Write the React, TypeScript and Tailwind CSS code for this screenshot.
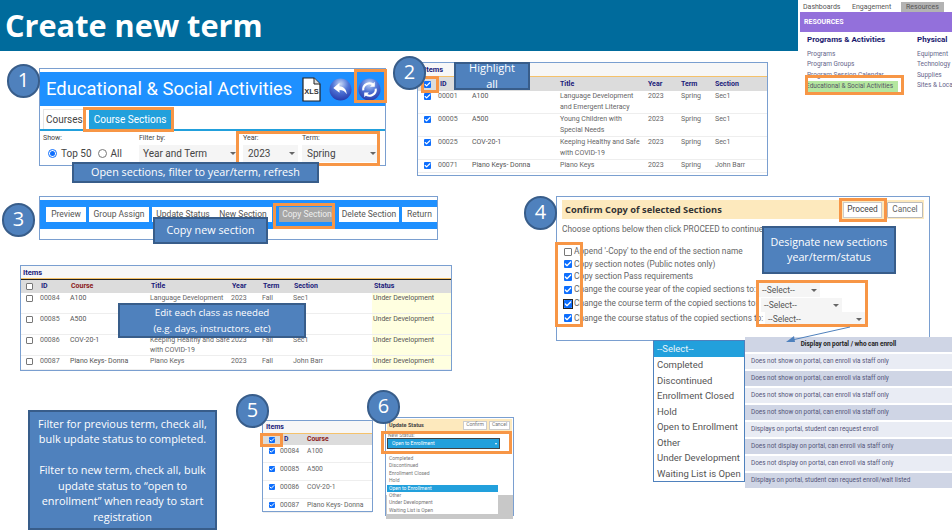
import { Check } from 'lucide-react'

const OPEN = 'font-["Open_Sans",sans-serif]'

const SECTIONS = [
  { id: '00001', course: 'A100', title: ['Language Development', 'and Emergent Literacy'], section: 'Sec1' },
  { id: '00005', course: 'A500', title: ['Young Children with', 'Special Needs'], section: 'Sec1' },
  { id: '00025', course: 'COV-20-1', title: ['Keeping Healthy and Safe', 'with COVID-19'], section: 'Sec1' },
  { id: '00071', course: 'Piano Keys- Donna', title: ['Piano Keys'], section: 'John Barr' },
]

const COPIED = [
  { id: '00084', course: 'A100', title: ['Language Development'], section: 'Sec1' },
  { id: '00085', course: 'A500', title: [''], section: '' },
  { id: '00086', course: 'COV-20-1', title: ['Keeping Healthy and Safe', 'with COVID-19'], section: 'Sec1' },
  { id: '00087', course: 'Piano Keys- Donna', title: ['Piano Keys'], section: 'John Barr' },
]

const STATUSES = ['Completed', 'Discontinued', 'Enrollment Closed', 'Hold', 'Open to Enrollment', 'Other', 'Under Development', 'Waiting List is Open']

const PORTAL = [
  'Does not show on portal, can enroll via staff only',
  'Does not show on portal, can enroll via staff only',
  'Does not show on portal, can enroll via staff only',
  'Does not show on portal, can enroll via staff only',
  'Displays on portal, student can request enroll',
  'Does not display on portal, can enroll via staff only',
  'Does not display on portal, can enroll via staff only',
  'Displays on portal, student can request enroll/wait listed',
]

function Step({ n, className }: { n: number; className: string }) {
  return (
    <div className={`absolute z-30 flex h-[34px] w-[33px] items-center justify-center rounded-full border-2 border-[#385d8a] bg-[#4f81bd] pb-[3px] text-[20px] text-white ${OPEN} ${className}`}>
      {n}
    </div>
  )
}

function Callout({ className, children }: { className: string; children: React.ReactNode }) {
  return (
    <div className={`absolute z-20 flex flex-col items-center justify-center border-2 border-[#385d8a] bg-[#4f81bd] text-center text-white ${OPEN} ${className}`}>
      {children}
    </div>
  )
}

function Mark({ className }: { className: string }) {
  return <div className={`absolute z-10 border-[3px] border-[#f79646] ${className}`} />
}

function Box({ on = true, size = 'size-[7px]' }: { on?: boolean; size?: string }) {
  return on ? (
    <span className={`flex ${size} items-center justify-center rounded-[1px] bg-[#0d6efd] text-white`}>
      <Check className="size-full" strokeWidth={4} />
    </span>
  ) : (
    <span className={`block ${size} rounded-[1px] border border-[#777] bg-white`} />
  )
}

function Select({ label, className }: { label: string; className: string }) {
  return (
    <div className={`flex items-center justify-between bg-[#f5f5f5] ${className}`}>
      <span>{label}</span>
      <span className="mr-[1px] h-0 w-0 border-x-[3px] border-t-[3px] border-x-transparent border-t-[#666]" />
    </div>
  )
}

function RoundIcon({ kind }: { kind: 'back' | 'refresh' }) {
  const gid = `grad-${kind}`
  return (
    <svg width="23" height="23" viewBox="0 0 24 24">
      <defs>
        <radialGradient id={gid} cx="50%" cy="25%" r="80%">
          <stop offset="0%" stopColor="#c5d6f5" />
          <stop offset="45%" stopColor="#4f74d6" />
          <stop offset="100%" stopColor="#2235a8" />
        </radialGradient>
      </defs>
      <circle cx="12" cy="12" r="11.5" fill={`url(#${gid})`} />
      {kind === 'back' ? (
        <path d="M11 5 L4.5 10.5 L11 15.5 V12.5 C14.5 12.5 17 14 18.5 17 C18.5 12 15.5 8.8 11 8.5 Z" fill="#fff" />
      ) : (
        <g fill="none" stroke="#fff" strokeWidth="2.2">
          <path d="M5.5 13 A6.5 6.5 0 0 1 16.5 7.5" />
          <path d="M18.5 11 A6.5 6.5 0 0 1 7.5 16.5" />
          <path d="M17.5 4 V9 H12.5 Z" fill="#fff" stroke="none" />
          <path d="M6.5 20 V15 H11.5 Z" fill="#fff" stroke="none" />
        </g>
      )}
    </svg>
  )
}

function XlsIcon() {
  return (
    <svg width="19" height="25" viewBox="0 0 19 25">
      <path d="M1 1 H12 L18 7 V24 H1 Z" fill="#fff" stroke="#222" strokeWidth="1.2" />
      <path d="M12 1 V7 H18" fill="#ddd" stroke="#222" strokeWidth="1" />
      <text x="9.5" y="17" textAnchor="middle" fontSize="7.5" fontWeight="700" fill="#333" fontFamily="Liberation Sans">XLS</text>
    </svg>
  )
}

function ActivitiesPanel() {
  return (
    <div className="absolute left-[39px] top-[68px] flex h-[98px] w-[347px] flex-col border border-[#7a9fd0] bg-white pt-[3px]">
      <div className="flex h-[34px] items-center bg-[#1e90ff] pl-[6px] text-white">
        <span className="w-[256px] text-[18.4px] leading-none whitespace-nowrap">Educational &amp; Social Activities</span>
        <XlsIcon />
        <span className="ml-[8px]"><RoundIcon kind="back" /></span>
        <span className="ml-[6px]"><RoundIcon kind="refresh" /></span>
      </div>
      <div className="flex h-[25px] items-end border-b-2 border-[#22a0dc] pl-[3px] text-[10px] text-[#444]">
        <span className="flex h-[20px] items-center border border-b-0 border-[#e5e5e5] px-[2px]">Courses</span>
        <span className="ml-[3px] flex h-[19px] items-center bg-[#22a0dc] px-[5px] text-white">Course Sections</span>
      </div>
      <div className="flex gap-[4px] pl-[3px] pt-[2px] text-[#444]">
        <div className="w-[92px] text-[7px]">
          <div>Show:</div>
          <div className="mt-[2px] flex items-center pl-[5px] text-[10px]">
            <span className="flex size-[9px] items-center justify-center rounded-full border border-[#0d6efd]"><span className="size-[5px] rounded-full bg-[#0d6efd]" /></span>
            <span className="ml-[4px]">Top 50</span>
            <span className="ml-[6px] size-[9px] rounded-full border border-[#777]" />
            <span className="ml-[4px]">All</span>
          </div>
        </div>
        <div className="w-[100px] text-[7px]">
          <div>Filter by:</div>
          <Select label="Year and Term" className="mt-[1px] h-[17px] pl-[4px] pr-[2px] text-[10px]" />
        </div>
        <div className="w-[55px] text-[7px]">
          <div>Year:</div>
          <Select label="2023" className="mt-[1px] h-[17px] pl-[5px] pr-[2px] text-[10px]" />
        </div>
        <div className="w-[78px] text-[7px]">
          <div>Term:</div>
          <Select label="Spring" className="mt-[1px] h-[17px] pl-[5px] pr-[3px] text-[10px]" />
        </div>
      </div>
    </div>
  )
}

function HighlightPanel() {
  const cols = 'grid-cols-[14px_34px_88px_88px_33px_34px_1fr]'
  return (
    <div className="absolute left-[417px] top-[62px] h-[114px] w-[351px] border border-[#7a9fd0] bg-white text-[7px] text-[#666]">
      <div className="h-[13px] bg-[#f7f7f7] pl-[6px] pt-[1px] text-[7.5px] font-bold text-[#1a1a7a]">Items</div>
      <div className="h-[1px] bg-[#f5c26b]" />
      <div className={`grid h-[14px] ${cols} items-center bg-[#dcdcdc] pl-[6px] font-bold text-[#1a1a7a]`}>
        <Box />
        <span className="pl-[2px]">ID</span>
        <span />
        <span>Title</span>
        <span>Year</span>
        <span>Term</span>
        <span>Section</span>
      </div>
      {SECTIONS.map((s, i) => (
        <div key={s.id} className={`grid ${cols} border-b border-[#eee] pl-[6px] leading-[11px] ${i < 3 ? 'h-[23px]' : 'h-[13px]'}`}>
          <span className="pt-[2px]"><Box /></span>
          <span>{s.id}</span>
          <span className="text-[#555]">{s.course}</span>
          <span className="whitespace-nowrap">{s.title.map((t) => <div key={t}>{t}</div>)}</span>
          <span>2023</span>
          <span>Spring</span>
          <span>{s.section}</span>
        </div>
      ))}
    </div>
  )
}

function ResourcesMenu() {
  return (
    <div className="absolute left-[800px] top-0 h-[95px] w-[152px] overflow-hidden bg-white text-[#555]">
      <div className="flex h-[12px] items-end gap-[8px] pl-[3px] text-[7px] leading-[10px]">
        <span className="w-[41px]">Dashboards</span>
        <span className="w-[41px]">Engagement</span>
        <span className="bg-[#b3b3b3] px-[5px]">Resources</span>
      </div>
      <div className="flex h-[20px] items-center bg-[#9370db] pl-[4px] text-[7px] font-bold text-white">RESOURCES</div>
      <div className="flex pl-[7px] pt-[3px] text-[6.5px] leading-[10.5px]">
        <div className="w-[110px] shrink-0">
          <div className="mb-[3px] text-[8px] font-bold text-[#1a1a6e]">Programs &amp; Activities</div>
          <div className="text-[#66668a]">Programs</div>
          <div className="text-[#66668a]">Program Groups</div>
          <div className="text-[#66668a]">Program Session Calendar</div>
          <div className="mt-[1px] -ml-[1px] w-[92px] bg-[#b5e7a0] whitespace-nowrap text-[#556]">Educational &amp; Social Activities</div>
        </div>
        <div className="whitespace-nowrap">
          <div className="mb-[3px] text-[8px] font-bold text-[#1a1a6e]">Physical</div>
          <div className="text-[#66668a]">Equipment</div>
          <div className="text-[#66668a]">Technology</div>
          <div className="text-[#66668a]">Supplies</div>
          <div className="text-[#66668a]">Sites &amp; Locations</div>
        </div>
      </div>
    </div>
  )
}

function ActionBar() {
  const btn = 'flex h-[15px] items-center justify-center bg-white text-[8.5px] text-[#555]'
  return (
    <div className="absolute left-[39px] top-[196px] h-[44px] w-[399px] border border-[#7a9fd0] bg-white pt-[3px]">
      <div className="flex h-[29px] items-center gap-[3px] bg-[#1e90ff] pl-[6px]">
        <span className={`${btn} w-[40px]`}>Preview</span>
        <span className={`${btn} w-[60px]`}>Group Assign</span>
        <span className={`${btn} w-[62px]`}>Update Status</span>
        <span className={`${btn} -ml-[3px] w-[58px]`}>New Section</span>
        <span className={`${btn} ml-[4px] w-[56px] !bg-[#a6a6a6] !text-[#eee]`}>Copy Section</span>
        <span className={`${btn} ml-[1px] w-[60px]`}>Delete Section</span>
        <span className={`${btn} w-[35px]`}>Return</span>
      </div>
    </div>
  )
}

function CopiedTable() {
  const cols = 'grid-cols-[14px_30px_80px_81px_31px_31px_80px_1fr]'
  return (
    <div className="absolute left-[20px] top-[265px] h-[106px] w-[432px] border border-[#7a9fd0] bg-white text-[7px] text-[#666]">
      <div className="h-[12px] bg-[#f7f7f7] pl-[2px] pt-[1px] text-[7.5px] font-bold text-[#1a1a7a]">Items</div>
      <div className="h-[1px] bg-[#f5c26b]" />
      <div className="h-[1px] bg-[#222]" />
      <div className={`grid h-[13px] ${cols} items-center bg-[#dcdcdc] pl-[5px] font-bold text-[#1a1a7a]`}>
        <Box on={false} />
        <span className="pl-[1px]">ID</span>
        <span className="pl-[1px] text-[#8b1a1a]">Course</span>
        <span className="pl-[1px]">Title</span>
        <span className="pl-[1px]">Year</span>
        <span className="pl-[1px]">Term</span>
        <span className="pl-[1px]">Section</span>
        <span className="pl-[1px]">Status</span>
      </div>
      {COPIED.map((s, i) => (
        <div key={s.id} className={`grid ${cols} border-b border-[#eee] pl-[5px] leading-[10px] ${i < 3 ? 'h-[21px]' : 'h-[14px]'}`}>
          <span className="pt-[2px]"><Box on={false} /></span>
          <span>{s.id}</span>
          <span className="text-[#555]">{s.course}</span>
          <span className="whitespace-nowrap">{s.title.map((t) => <div key={t}>{t}</div>)}</span>
          <span>{s.section ? '2023' : ''}</span>
          <span>{s.section ? 'Fall' : ''}</span>
          <span>{s.section}</span>
          <span className="-ml-[1px] bg-[#ffffe0] pl-[1px] text-[#555]">Under Development</span>
        </div>
      ))}
    </div>
  )
}

function ConfirmPanel() {
  const rows = [
    { label: "Append '-Copy' to the end of the section name", on: false, h: 'h-[13px]' },
    { label: 'Copy section notes (Public notes only)', on: true, h: 'h-[12px]' },
    { label: 'Copy section Pass requirements', on: true, h: 'h-[13px]' },
    { label: 'Change the course year of the copied sections to:', on: true, h: 'h-[13px]' },
    { label: 'Change the course term of the copied sections to:', on: true, h: 'h-[15px]' },
    { label: 'Change the course status of the copied sections to:', on: true, h: 'h-[14px]' },
  ]
  return (
    <div className="absolute left-[556px] top-[196px] h-[145px] w-[374px] border border-[#7a9fd0] bg-white text-[8.3px] text-[#666]">
      <div className="mx-[5px] mt-[3px] flex h-[19px] items-center bg-[#fde9bd] pl-[3px]">
        <span className={`flex-1 text-[9.3px] font-bold text-[#333] ${OPEN}`}>Confirm Copy of selected Sections</span>
        <span className="mr-[5px] flex h-[16px] w-[39px] items-center justify-center border border-[#ccc] bg-white text-[#444]">Proceed</span>
        <span className="mr-[1px] flex h-[16px] w-[36px] items-center justify-center rounded-[1px] border border-[#bbb] bg-white">Cancel</span>
      </div>
      <div className="mt-[4px] pl-[5px] leading-[12px]">Choose options below then click PROCEED to continue</div>
      <div className="mt-[10px] pl-[7px]">
        {rows.map((r, i) => (
          <div key={r.label} className={`flex items-center gap-[2px] whitespace-nowrap ${r.h}`}>
            <span className={i === 4 ? 'outline outline-1 outline-[#222]' : ''}><Box on={r.on} size="size-[8px]" /></span>
            <span>{r.label}</span>
          </div>
        ))}
      </div>
    </div>
  )
}

function StatusDropdown() {
  return (
    <div className="absolute left-[653px] top-[340px] z-10 h-[142px] w-[92px] border border-[#4f81bd] bg-white text-[9.5px] leading-[15.5px] text-[#555]">
      <div className="h-[16px] bg-[#22a0dc] pl-[3px] text-[#e8f4fb]">--Select--</div>
      {STATUSES.map((s) => (
        <div key={s} className="whitespace-nowrap pl-[3px]">{s}</div>
      ))}
    </div>
  )
}

function PortalTable() {
  return (
    <div className="absolute left-[745px] top-[337px] z-10 flex w-[207px] flex-col gap-[2px] bg-white text-[6.4px] text-[#55557a]">
      <div className="flex h-[15px] items-center justify-center bg-[#cfd5e5] font-bold text-[#222]">Display on portal / who can enroll</div>
      {PORTAL.map((p, i) => (
        <div key={i} className={`flex h-[15px] items-center pl-[6px] ${i % 2 === 0 ? 'bg-[#e9ecf4]' : 'bg-[#cfd5e5]'}`}>{p}</div>
      ))}
    </div>
  )
}

function MiniItems() {
  return (
    <div className="absolute left-[262px] top-[420px] h-[92px] w-[111px] border border-[#7a9fd0] bg-white text-[6.8px] text-[#666]">
      <div className="h-[12px] bg-[#f7f7f7] pl-[3px] pt-[1px] text-[7px] font-bold text-[#1a1a7a]">Items</div>
      <div className="h-[1px] bg-[#f5c26b]" />
      <div className="grid h-[11px] grid-cols-[11px_27px_1fr] items-center bg-[#dcdcdc] pl-[6px] font-bold text-[#1a1a7a]">
        <Box size="size-[6px]" />
        <span className="pl-[4px]">D</span>
        <span className="text-[#8b1a1a]">Course</span>
      </div>
      {COPIED.map((s, i) => (
        <div key={s.id} className={`grid grid-cols-[11px_27px_1fr] border-b border-[#eee] pl-[6px] pt-[2px] leading-[9px] ${i < 3 ? 'h-[18px]' : 'h-[14px]'}`}>
          <span className="pt-[1px]"><Box size="size-[6px]" /></span>
          <span>{s.id}</span>
          <span className="whitespace-nowrap">{s.course}</span>
        </div>
      ))}
    </div>
  )
}

function UpdateStatus() {
  return (
    <div className="absolute left-[385px] top-[417px] h-[99px] w-[129px] border border-[#7a9fd0] bg-white text-[5px] text-[#777]">
      <div className="mx-[1px] mt-[1px] flex h-[12px] items-center bg-[#fde9bd] pl-[2px]">
        <span className="flex-1 text-[5.5px] font-bold text-[#444]">Update Status</span>
        <span className="mr-[2px] flex h-[9px] w-[24px] items-center justify-center border border-[#ccc] bg-white">Confirm</span>
        <span className="mr-[2px] flex h-[9px] w-[21px] items-center justify-center border border-[#ccc] bg-white">Cancel</span>
      </div>
      <div className="mt-[2px] pl-[2px] leading-[5px]">New Status:</div>
      <div className="relative h-[81px]">
        <div className="absolute inset-x-0 bottom-0 h-[24px] bg-[#c8c8c8]" />
        <div className="absolute left-[1px] top-0 flex h-[11px] w-[113px] items-center justify-between border border-[#444] bg-[#22a0dc] pl-[4px] pr-[2px] text-white">
          <span>Open to Enrollment</span>
          <span className="h-0 w-0 border-x-[1.5px] border-t-[2px] border-x-transparent border-t-white" />
        </div>
        <div className="absolute left-[1px] top-[11px] h-[65px] w-[111px] bg-white pt-[6px] leading-[7.4px]">
          {STATUSES.map((s) => (
            <div key={s} className={`pl-[2px] ${s === 'Open to Enrollment' ? 'bg-[#22a0dc] text-white' : ''}`}>{s}</div>
          ))}
        </div>
      </div>
    </div>
  )
}

export default function App() {
  return (
    <div className='relative h-[532px] w-[952px] overflow-hidden bg-white font-["Roboto",sans-serif]'>
      <div className={`flex h-[51px] w-[798px] items-center bg-[#006b9c] pl-[5px] text-[30.7px] font-bold text-white ${OPEN}`}>Create new term</div>
      <ResourcesMenu />
      <Mark className="left-[805px] top-[75px] h-[20px] w-[99px]" />

      <ActivitiesPanel />
      <Step n={1} className="left-[7px] top-[64px]" />
      <Mark className="left-[354px] top-[69px] h-[34px] w-[33px]" />
      <Mark className="left-[83px] top-[107px] h-[25px] w-[91px]" />
      <Mark className="left-[236px] top-[131px] h-[35px] w-[144px]" />
      <Callout className="left-[72px] top-[162px] h-[21px] w-[247px] text-[10.8px]">Open sections, filter to year/term, refresh</Callout>

      <HighlightPanel />
      <Step n={2} className="left-[393px] top-[56px]" />
      <Mark className="left-[421px] top-[76px] h-[17px] w-[18px]" />
      <Callout className="left-[454px] top-[62px] h-[28px] w-[76px] text-[11px] leading-[16px]"><span>Highlight</span><span>all</span></Callout>

      <ActionBar />
      <Step n={3} className="left-[2px] top-[203px]" />
      <Mark className="left-[273px] top-[203px] h-[26px] w-[62px]" />
      <Callout className="left-[153px] top-[217px] h-[27px] w-[115px] text-[10.8px]">Copy new section</Callout>

      <CopiedTable />
      <Callout className="left-[118px] top-[303px] h-[35px] w-[188px] text-[9.7px] leading-[16px]"><span>Edit each class as needed</span><span>(e.g. days, instructors, etc)</span></Callout>

      <ConfirmPanel />
      <Step n={4} className="left-[524px] top-[196px]" />
      <Mark className="left-[839px] top-[198px] h-[24px] w-[48px]" />
      <Mark className="left-[555px] top-[242px] h-[85px] w-[28px]" />
      <Callout className="left-[762px] top-[226px] h-[48px] w-[134px] text-[10.7px] leading-[15px]"><span>Designate new sections</span><span>year/term/status</span></Callout>
      <Select label="--Select--" className="absolute left-[759px] top-[283px] z-[5] h-[14px] w-[61px] pl-[3px] pr-[2px] text-[8.5px] text-[#555]" />
      <Select label="--Select--" className="absolute left-[761px] top-[298px] z-[5] h-[14px] w-[81px] pl-[3px] pr-[2px] text-[8.5px] text-[#555]" />
      <Select label="--Select--" className="absolute left-[765px] top-[312px] z-[5] h-[14px] w-[100px] pl-[3px] pr-[2px] text-[8.5px] text-[#555]" />
      <Mark className="left-[756px] top-[280px] h-[47px] w-[112px]" />

      <StatusDropdown />
      <PortalTable />
      <svg className="absolute left-[780px] top-[324px] z-20" width="75" height="22" viewBox="0 0 75 22">
        <path d="M70 3 L12 16" stroke="#4f81bd" strokeWidth="1" />
        <path d="M6 18 L14 12 L15 18 Z" fill="#4f81bd" />
      </svg>

      <Callout className="left-[28px] top-[410px] h-[120px] w-[189px] px-[5px] text-[10.9px] leading-[15.5px]">
        <p>Filter for previous term, check all, bulk update status to completed.</p>
        <p className="mt-[15.5px]">Filter to new term, check all, bulk update status to “open to enrollment” when ready to start registration</p>
      </Callout>

      <MiniItems />
      <Step n={5} className="left-[236px] top-[394px]" />
      <Mark className="left-[260px] top-[433px] h-[14px] w-[23px]" />

      <UpdateStatus />
      <Step n={6} className="left-[367px] top-[390px]" />
      <Mark className="left-[381px] top-[431px] h-[23px] w-[131px]" />
    </div>
  )
}
